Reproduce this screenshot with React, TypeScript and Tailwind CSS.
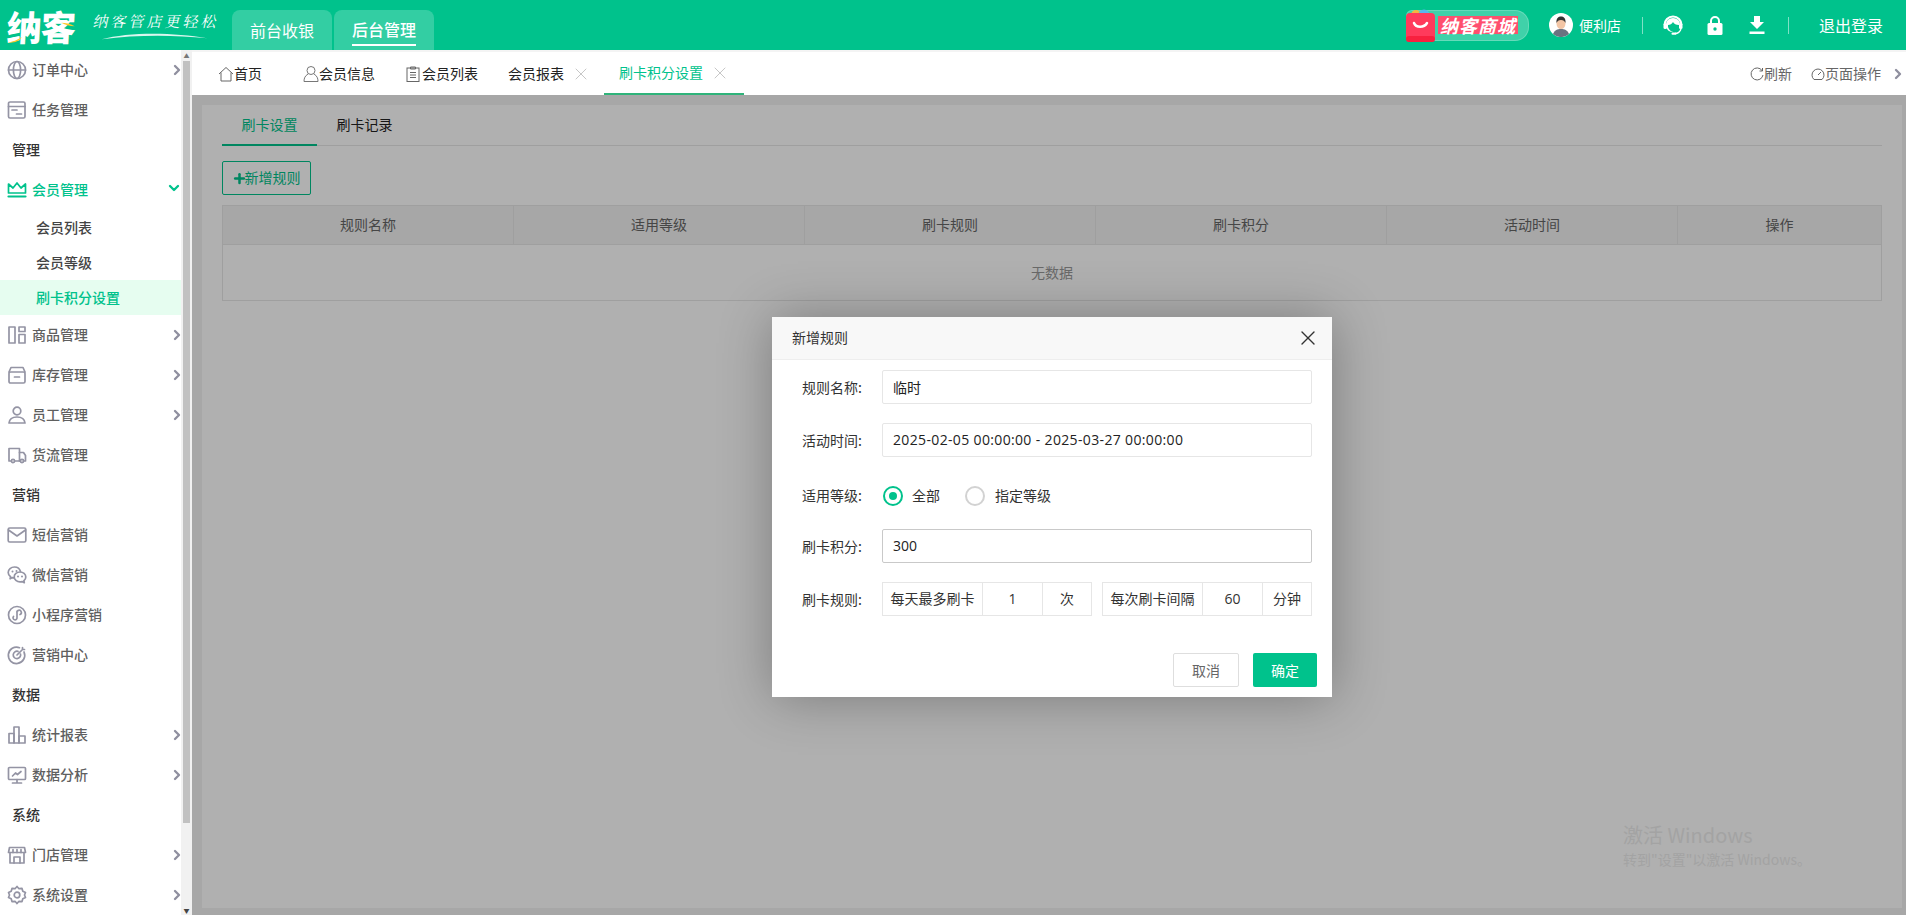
import { ChevronRight, ChevronDown, X, Plus } from "lucide-react";
import type { ReactNode } from "react";

const Ico = ({ children }: { children: ReactNode }) => (
  <svg
    viewBox="0 0 20 20"
    width="20"
    height="20"
    fill="none"
    stroke="currentColor"
    strokeWidth="1.7"
    strokeLinecap="round"
    strokeLinejoin="round"
    className="shrink-0"
  >
    {children}
  </svg>
);

const icons: Record<string, ReactNode> = {
  globe: (
    <Ico>
      <circle cx="10" cy="10" r="8.5" />
      <ellipse cx="10" cy="10" rx="3.6" ry="8.5" />
      <path d="M1.500 10h17" />
    </Ico>
  ),
  task: (
    <Ico>
      <rect x="1.500" y="2" width="16.500" height="16" rx="1.500" />
      <path d="M1.500 6.500h16.500M5 10h5M9.500 14h5" />
    </Ico>
  ),
  crown: (
    <Ico>
      <path d="M1.500 13V4l4.500 4 4-5 4 5 4.500-4v9z" />
      <path d="M1.500 16.500h17" strokeWidth="2.200" />
    </Ico>
  ),
  goods: (
    <Ico>
      <rect x="2" y="2" width="6" height="16" />
      <rect x="12" y="2" width="6" height="4.500" />
      <rect x="12" y="9.500" width="6" height="8.500" />
    </Ico>
  ),
  stock: (
    <Ico>
      <path d="M2 7l2-4.500h12L18 7" />
      <rect x="2" y="7" width="16" height="11" rx="1.500" />
      <path d="M7.500 12h5" />
    </Ico>
  ),
  staff: (
    <Ico>
      <circle cx="10" cy="6" r="3.800" />
      <path d="M2 18c.5-4.500 4-6 8-6s7.500 1.500 8 6z" />
    </Ico>
  ),
  truck: (
    <Ico>
      <path d="M4 16H2V3.500h10.500V16H8" />
      <path d="M12.500 7.500h4l2 3V16h-2M12.500 16h.5" />
      <circle cx="6" cy="16" r="1.600" />
      <circle cx="15" cy="16" r="1.600" />
    </Ico>
  ),
  mail: (
    <Ico>
      <rect x="1.200" y="3" width="17.600" height="14" rx="1.500" />
      <path d="M1.500 5l8.500 6 8.500-6" />
    </Ico>
  ),
  wechat: (
    <Ico>
      <path d="M13.500 6.500C12.800 3.800 10.500 2 7.500 2 4 2 1.200 4.400 1.200 7.500c0 1.800 1 3.300 2.400 4.300l-.5 2 2.300-1.200c.5.100 1 .2 1.600.2" />
      <path d="M13 7c3.200 0 5.800 2.200 5.800 5 0 1.500-.7 2.800-1.900 3.700l.4 2-2.200-1.100c-.6.200-1.300.3-2.100.3-3.200 0-5.800-2.200-5.800-5s2.600-4.900 5.800-4.900z" />
      <path d="M5.500 6.500h.01M9.500 6h.01M11 11.500h.01M15 11.500h.01" strokeWidth="2" />
    </Ico>
  ),
  mini: (
    <Ico>
      <circle cx="10" cy="10" r="8.500" />
      <path d="M6.500 11.500a2 2 0 1 0 3.500 1V8a2.200 2.200 0 1 1 3 1.500" />
    </Ico>
  ),
  target: (
    <Ico>
      <path d="M17 7a8.200 8.200 0 1 1-4.500-4.300" />
      <path d="M13.500 9a3.700 3.700 0 1 1-2.500-2.600" />
      <path d="M10 10l5.500-5.500M15.500 4.500V2.500M15.500 4.500h2" />
    </Ico>
  ),
  chart: (
    <Ico>
      <rect x="2" y="8.500" width="5" height="9.500" />
      <rect x="7" y="2" width="5" height="16" />
      <rect x="12" y="11" width="6" height="7" />
    </Ico>
  ),
  monitor: (
    <Ico>
      <rect x="1.500" y="2.500" width="17" height="12" rx="1" />
      <path d="M10 14.500V18M5.500 18h9M5.500 11l3-3 2 1.500 3.500-3" />
    </Ico>
  ),
  store: (
    <Ico>
      <path d="M2.500 2.500h15l1 5H1.500zM3 7.500V18h14V7.500" />
      <path d="M6 4.500v3M10 4.500v3M14 4.500v3M7 18v-6h6v6" />
    </Ico>
  ),
  gear: (
    <Ico>
      <path d="M10 1.500l2 2.200 3-.3.8 2.800 2.700 1.300-1 2.500 1 2.500-2.700 1.300-.8 2.800-3-.3-2 2.200-2-2.200-3 .3-.8-2.800-2.700-1.300 1-2.500-1-2.500 2.700-1.300.8-2.800 3 .3z" />
      <circle cx="10" cy="10" r="2.800" />
    </Ico>
  ),
};

type MenuRow =
  | { type: "item"; label: string; icon: string; arrow?: boolean }
  | { type: "open"; label: string; icon: string }
  | { type: "section"; label: string }
  | { type: "sub"; label: string; active?: boolean };

const menu: MenuRow[] = [
  { type: "item", label: "订单中心", icon: "globe", arrow: true },
  { type: "item", label: "任务管理", icon: "task" },
  { type: "section", label: "管理" },
  { type: "open", label: "会员管理", icon: "crown" },
  { type: "sub", label: "会员列表" },
  { type: "sub", label: "会员等级" },
  { type: "sub", label: "刷卡积分设置", active: true },
  { type: "item", label: "商品管理", icon: "goods", arrow: true },
  { type: "item", label: "库存管理", icon: "stock", arrow: true },
  { type: "item", label: "员工管理", icon: "staff", arrow: true },
  { type: "item", label: "货流管理", icon: "truck" },
  { type: "section", label: "营销" },
  { type: "item", label: "短信营销", icon: "mail" },
  { type: "item", label: "微信营销", icon: "wechat" },
  { type: "item", label: "小程序营销", icon: "mini" },
  { type: "item", label: "营销中心", icon: "target" },
  { type: "section", label: "数据" },
  { type: "item", label: "统计报表", icon: "chart", arrow: true },
  { type: "item", label: "数据分析", icon: "monitor", arrow: true },
  { type: "section", label: "系统" },
  { type: "item", label: "门店管理", icon: "store", arrow: true },
  { type: "item", label: "系统设置", icon: "gear", arrow: true },
];

const columns = ["规则名称", "适用等级", "刷卡规则", "刷卡积分", "活动时间", "操作"];

const Sidebar = () => (
  <aside className="w-[181px] shrink-0 bg-white text-sm">
    {menu.map((row) => {
      if (row.type === "section") {
        return (
          <div key={row.label} className="h-10 pl-3 pb-[2px] flex items-center font-medium text-[#333]">
            {row.label}
          </div>
        );
      }
      if (row.type === "sub") {
        return (
          <div
            key={row.label}
            className={`h-[35px] pl-9 pb-[2px] flex items-center font-medium ${
              row.active ? "bg-[#e6fdf0] text-[#00c28c]" : "text-[#444]"
            }`}
          >
            {row.label}
          </div>
        );
      }
      const open = row.type === "open";
      return (
        <div
          key={row.label}
          className={`h-10 pl-[7px] flex items-center gap-[5px] font-medium ${
            open ? "text-[#00c28c]" : "text-[#5f5f5f]"
          }`}
        >
          <span className={open ? "text-[#00c28c]" : "text-[#9494a4]"}>{icons[row.icon]}</span>
          <span className="flex-1 pb-[2px]">{row.label}</span>
          {open && <ChevronDown size={16} strokeWidth={3.5} className="text-[#00c28c] -mr-[1px] -mt-1" />}
          {row.type === "item" && row.arrow && (
            <ChevronRight size={16} strokeWidth={3.5} className="text-[#8f8f9f] -mr-[4px]" />
          )}
        </div>
      );
    })}
  </aside>
);

const SideScrollbar = () => (
  <div className="w-[11px] shrink-0 bg-[#f1f1f1] flex flex-col items-center">
    <div className="h-[11px] flex items-center text-[#777] text-[6px] leading-none">▲</div>
    <div className="w-[7px] h-[762px] bg-[#c1c1c1]" />
    <div className="mt-auto h-[9px] flex items-center text-[#444] text-[6px] leading-none">▼</div>
  </div>
);

const TopBar = () => (
  <header className="h-[50px] shrink-0 bg-[#00c28c] flex text-white">
    <div className="w-[232px] shrink-0 flex items-center pl-[7px]">
      <div className="relative">
        <span className="block text-[35px] leading-none font-black tracking-[-1px] -skew-x-3">纳客</span>
        <svg viewBox="0 0 30 10" width="20" height="8" className="absolute left-0 -bottom-[1px]">
          <path d="M1 9C8 8 16 5 22 1c-2 5-10 9-21 8z" fill="#ffc928" />
        </svg>
        <svg viewBox="0 0 16 6" width="14" height="5" className="absolute right-0 top-[14px]">
          <path d="M0 1c5 0 10 1 16 4-6 0-11-1-16-4z" fill="#ffc928" />
        </svg>
      </div>
      <div className="relative ml-[19px] -mt-[10px]">
        <span className="block text-[15px] leading-none tracking-[3px] -skew-x-12 whitespace-nowrap font-['Noto_Serif_CJK_SC','Noto_Sans_CJK_SC',serif]">
          纳客管店更轻松
        </span>
        <svg viewBox="0 0 120 10" width="118" height="9" className="absolute left-[2px] top-[19px]">
          <path d="M1 8C30 0 80 0 118 7 80 3 40 3 1 8z" fill="#fff" fillOpacity="0.85" />
        </svg>
      </div>
    </div>
    <div className="flex items-end gap-[2px]">
      <div className="w-[100px] h-10 rounded-t-lg bg-white/20 flex items-center justify-center text-base">
        前台收银
      </div>
      <div className="w-[100px] h-10 rounded-t-lg bg-white/20 flex items-center justify-center text-base">
        <span className="border-b-2 border-white leading-[30px] font-medium">后台管理</span>
      </div>
    </div>

    <div className="ml-auto flex items-center pr-[23px]">
      <div className="relative w-[123px] h-[31px] rounded-r-[14px] rounded-l-md bg-white/25 border border-white/20 flex items-center">
        <svg viewBox="0 0 30 33" width="30" height="33" className="absolute -left-[1px] -top-[2px]">
          <circle cx="10" cy="6" r="5" fill="#f5b53f" />
          <circle cx="18" cy="6" r="5.500" fill="#58b6ee" />
          <rect x="0" y="4" width="29" height="29" rx="4" fill="#ff3a5c" />
          <rect x="0" y="27" width="29" height="6" rx="3" fill="#f8203f" />
          <path d="M8 14c2 5 10 5 13 0" fill="none" stroke="#fff" strokeWidth="2.500" strokeLinecap="round" />
        </svg>
        <span className="ml-[31px] bg-[#ff4f6e] px-[2px] text-[18px] leading-[18px] font-bold italic tracking-[1px] whitespace-nowrap">
          纳客商城
        </span>
      </div>
      <svg viewBox="0 0 24 24" width="24" height="24" className="ml-[20px]">
        <circle cx="12" cy="12" r="12" fill="#fff" />
        <path d="M4 21c1.500-4 4.500-5 8-5s6.500 1 8 5a12 12 0 0 1-16 0z" fill="#6b7280" />
        <ellipse cx="12" cy="10.500" rx="4.500" ry="5.500" fill="#f3c5a5" />
        <path d="M7.500 10c-.5-5 2-6.500 4.500-6.500s5 1.500 4.500 6.500c-1-2-2-3-4.500-3s-3.500 1-4.500 3z" fill="#333" />
      </svg>
      <span className="ml-[6px] text-sm">便利店</span>
      <div className="ml-[21px] w-px h-[17px] bg-white/50" />
      <svg viewBox="0 0 20 22" width="20" height="22" fill="none" className="ml-[20px]">
        <path d="M1.500 11a8.500 8.500 0 0 1 17 0" stroke="#fff" strokeWidth="2.200" />
        <path d="M3 10a7 6 0 0 1 14 0l-1 1c-3 0-5-1-6-3-1 2-3 3-5 3v2c1 3 3 4.500 5 4.500-3 1-7-1-7-7.500z" fill="#fff" />
        <rect x="0.500" y="9.500" width="3.500" height="5.500" rx="1.500" fill="#fff" />
        <rect x="16" y="9.500" width="3.500" height="5.500" rx="1.500" fill="#fff" />
        <path d="M18 15c-1 3-3 4.500-6 4.500" stroke="#fff" strokeWidth="1.300" />
        <rect x="8.500" y="18.500" width="5" height="2.200" rx="1" fill="#fff" />
      </svg>
      <svg viewBox="0 0 16 20" width="16" height="20" fill="none" className="ml-[24px]">
        <path d="M4 9V6a4 4 0 0 1 8 0v3" stroke="#fff" strokeWidth="2" />
        <rect x="0.500" y="8" width="15" height="12" rx="1.500" fill="#fff" />
        <circle cx="8" cy="14" r="1.700" fill="#00c28c" />
      </svg>
      <svg viewBox="0 0 16 20" width="16" height="20" className="ml-[26px]">
        <path d="M5 1h6v6h4l-7 7-7-7h4z" fill="#fff" />
        <rect x="0.500" y="16.500" width="15" height="2.500" fill="#fff" />
      </svg>
      <div className="ml-[23px] w-px h-[17px] bg-white/50" />
      <span className="ml-[30px] text-base whitespace-nowrap">退出登录</span>
    </div>
  </header>
);

const TabBar = () => (
  <div className="h-[45px] shrink-0 bg-white border-t-2 border-[#f4f4f4] flex items-center text-sm text-[#222]">
    <svg viewBox="0 0 16 16" width="16" height="16" fill="none" stroke="#666" strokeWidth="1" className="ml-[26px]">
      <path d="M1 8l7-6.500L15 8M3 6.500V15h10V6.500" />
    </svg>
    <span className="pb-[2px]">首页</span>
    <svg viewBox="0 0 16 18" width="16" height="18" fill="none" stroke="#777" strokeWidth="1" className="ml-[41px]">
      <circle cx="8" cy="5.500" r="4" />
      <path d="M5 9c-3 2-4 4-4 7.500h14C15 13 14 11 11 9" />
    </svg>
    <span className="pb-[2px]">会员信息</span>
    <svg viewBox="0 0 14 16" width="14" height="16" fill="none" stroke="#666" strokeWidth="1" className="ml-[31px] mr-[2px]">
      <rect x="1" y="2" width="12" height="13.500" />
      <path d="M4.500 1h5v2h-5zM4 6.500h6M4 9h6M4 11.500h6" />
    </svg>
    <span className="pb-[2px]">会员列表</span>
    <span className="ml-[30px] pb-[2px]">会员报表</span>
    <X size={20} strokeWidth={1} className="ml-[7px] text-[#bbb]" />
    <div className="ml-[13px] w-[140px] h-full flex items-center pl-[15px] border-b-2 border-[#2fb37a] text-[#00c28c]">
      <span className="pb-[2px]">刷卡积分设置</span>
      <X size={20} strokeWidth={1} className="ml-[7px] text-[#bbb]" />
    </div>
    <div className="ml-auto flex items-center text-[#666]">
      <svg viewBox="0 0 14 14" width="14" height="14" fill="none" stroke="#666" strokeWidth="1">
        <path d="M12 3.500A6 6 0 1 0 13 8M12.500 1v3h-3" />
      </svg>
      <span className="pb-[2px]">刷新</span>
      <svg viewBox="0 0 14 14" width="14" height="14" fill="none" stroke="#666" strokeWidth="1" className="ml-[19px]">
        <path d="M3 12.500a6 6 0 1 1 8 0zM7 8l3-3" />
      </svg>
      <span className="pb-[2px]">页面操作</span>
      <ChevronRight size={16} strokeWidth={3.5} className="ml-[9px] text-[#8f8f9f]" />
    </div>
  </div>
);

const Page = () => (
  <div className="h-full bg-[#f2f2f2] pt-[10px] pl-[10px] pr-[4px] pb-[7px]">
    <div className="h-full bg-white px-5 text-sm">
      <div className="h-[41px] flex border-b border-[#e6e6e6]">
        <div className="w-[95px] h-[41px] pb-[2px] flex items-center justify-center border-b-2 border-[#00c28c] text-[#00c28c]">
          刷卡设置
        </div>
        <div className="w-[95px] h-[40px] pb-[2px] flex items-center justify-center text-[#222]">刷卡记录</div>
      </div>
      <button className="mt-[15px] w-[89px] h-[34px] border border-[#00c28c] rounded-[2px] flex items-center justify-center text-[#00c28c]">
        <Plus size={15} strokeWidth={4} className="-mr-[2px] -ml-[1px]" />
        <span className="pb-[2px]">新增规则</span>
      </button>
      <div className="mt-[10px] border border-[#e6e6e6]">
        <div className="h-[39px] bg-[#f2f2f2] border-b border-[#e6e6e6] grid grid-cols-[291px_291px_291px_291px_291px_1fr]">
          {columns.map((col, i) => (
            <div
              key={col}
              className={`pb-[2px] flex items-center justify-center text-[#666] ${i < 5 ? "border-r border-[#e6e6e6]" : ""}`}
            >
              {col}
            </div>
          ))}
        </div>
        <div className="h-[55px] pb-[2px] flex items-center justify-center text-[#999]">无数据</div>
      </div>
    </div>
  </div>
);

const Field = ({ label, children }: { label: string; children: ReactNode }) => (
  <div className="h-[34px] flex items-center">
    <label className="w-20 shrink-0 text-[#333] whitespace-nowrap">{label}:</label>
    {children}
  </div>
);

const Cell = ({ className, children }: { className: string; children: ReactNode }) => (
  <div className={`h-[34px] border border-[#e6e6e6] flex items-center justify-center text-[#333] whitespace-nowrap font-['Open_Sans','Noto_Sans_CJK_SC',sans-serif] ${className}`}>
    {children}
  </div>
);

const Modal = () => (
  <div className="w-[560px] h-[380px] bg-white flex flex-col text-sm shadow-[1px_1px_50px_rgba(0,0,0,0.3)]">
    <div className="h-[43px] shrink-0 bg-[#f8f8f8] border-b border-[#eee] flex items-center justify-between pl-5 pr-3 text-[#333]">
      <span className="pb-[2px]">新增规则</span>
      <X size={24} strokeWidth={1.4} className="text-[#333]" />
    </div>
    <div className="pt-[10px] pl-[30px] pr-5 flex flex-col gap-[19px]">
      <Field label="规则名称">
        <div className="w-[430px] h-[34px] border border-[#e6e6e6] rounded-[2px] px-[10px] flex items-center text-[#222]">临时</div>
      </Field>
      <Field label="活动时间">
        <div className="w-[430px] h-[34px] border border-[#e6e6e6] rounded-[2px] px-[10px] flex items-center text-[#222] tracking-[0.35px] font-['Open_Sans',sans-serif]">
          2025-02-05 00:00:00 - 2025-03-27 00:00:00
        </div>
      </Field>
      <div className="h-[34px] pt-[6px] flex items-center">
        <label className="w-20 shrink-0 text-[#333] pb-[2px]">适用等级:</label>
        <span className="ml-[1px] w-5 h-5 rounded-full border-2 border-[#00c28c] flex items-center justify-center">
          <span className="w-2 h-2 rounded-full bg-[#00c28c]" />
        </span>
        <span className="ml-[9px] text-[#333] pb-[2px]">全部</span>
        <span className="ml-[25px] w-5 h-5 rounded-full border-2 border-[#d2d2d2]" />
        <span className="ml-[10px] text-[#333] pb-[2px]">指定等级</span>
      </div>
      <Field label="刷卡积分">
        <div className="w-[430px] h-[34px] border border-[#c9c9c9] rounded-[2px] px-[10px] flex items-center text-[#222] font-['Open_Sans',sans-serif]">300</div>
      </Field>
      <Field label="刷卡规则">
        <Cell className="w-[101px]">每天最多刷卡</Cell>
        <Cell className="w-[61px] -ml-px">1</Cell>
        <Cell className="w-[50px] -ml-px">次</Cell>
        <Cell className="w-[101px] ml-[10px]">每次刷卡间隔</Cell>
        <Cell className="w-[61px] -ml-px">60</Cell>
        <Cell className="w-[50px] -ml-px">分钟</Cell>
      </Field>
    </div>
    <div className="mt-auto pb-[10px] pr-[15px] flex justify-end gap-[14px]">
      <button className="w-[66px] h-[34px] border border-[#dedede] rounded-[2px] text-[#666]">取消</button>
      <button className="w-[64px] h-[34px] bg-[#00c28c] rounded-[2px] text-white">确定</button>
    </div>
  </div>
);

export default function App() {
  return (
    <div className="h-screen overflow-hidden flex flex-col font-['Noto_Sans_CJK_SC','Noto_Sans',sans-serif]">
      <TopBar />
      <div className="flex-1 min-h-0 flex">
        <Sidebar />
        <SideScrollbar />
        <main className="flex-1 min-w-0 flex flex-col">
          <TabBar />
          <div className="relative flex-1 min-h-0">
            <Page />
            {/* layer mask + dialog */}
            <div className="absolute inset-0 bg-[rgba(0,0,0,0.31)] flex items-center justify-center pl-[6px] pt-[4px]">
              <Modal />
            </div>
            {/* windows watermark */}
            <div className="absolute right-[20px] bottom-[46px] w-[263px] text-[#a3a3a3] pointer-events-none">
              <div className="text-xl leading-7">激活 Windows</div>
              <div className="text-sm leading-5">转到"设置"以激活 Windows。</div>
            </div>
          </div>
        </main>
      </div>
    </div>
  );
}
